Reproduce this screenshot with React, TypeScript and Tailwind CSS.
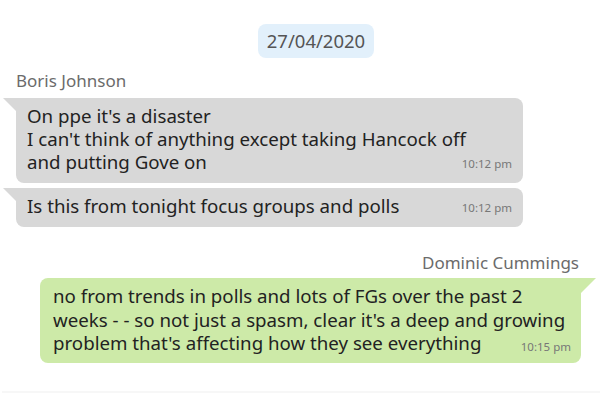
function GrayTail() {
    return <div className="h-[13px] w-[13px] shrink-0 bg-[#d8d8d8] [clip-path:polygon(0_0,100%_0,100%_100%)]"></div>;
}

function Time({ children, className = 'mt-[7px]' }: { children: string; className?: string }) {
    return (
        <span className={`float-right ml-[12px] text-[11.5px] leading-[14px] text-[#777] ${className}`}>{children}</span>
    );
}

export default function App() {
    return (
        <div className="w-[600px] h-[402px] bg-white overflow-hidden font-['Noto_Sans',sans-serif] text-[#222] flex flex-col">
            <div className="flex justify-center pl-[32px] pt-[24px]">
                <div className="rounded-[8px] bg-[#e2f0fb] px-[9px] h-[34px] flex items-center text-[18.5px] text-[#555]">
                    27/04/2020
                </div>
            </div>

            {/* Boris */}
            <div className="mt-[13px] pl-[16px] text-[17px] leading-[20px] text-[#6b6b6b]">Boris Johnson</div>
            <div className="mt-[7px] flex flex-col gap-[5px] pl-[3px]">
                <div className="flex">
                    <GrayTail />
                    <div className="w-[507px] whitespace-nowrap rounded-[8px] rounded-tl-none bg-[#d8d8d8] px-[11px] pt-[6px] pb-[10px] text-[18.7px] leading-[23px]">
                        On ppe it's a disaster
                        <br />
                        I can't think of anything except taking Hancock off
                        <br />
                        <Time>10:12 pm</Time>
                        and putting Gove on
                    </div>
                </div>
                <div className="flex">
                    <GrayTail />
                    <div className="w-[507px] whitespace-nowrap rounded-[8px] rounded-tl-none bg-[#d8d8d8] px-[11px] pt-[6px] pb-[10px] text-[18.7px] leading-[23px]">
                        <Time>10:12 pm</Time>
                        Is this from tonight focus groups and polls
                    </div>
                </div>
            </div>

            {/* Dominic */}
            <div className="mt-[26px] pr-[21px] text-right text-[17px] leading-[20px] text-[#6b6b6b]">Dominic Cummings</div>
            <div className="mt-[5px] flex justify-end pr-[4px]">
                <div className="w-[541px] whitespace-nowrap rounded-[8px] rounded-tr-none bg-[#cdeaa8] pl-[13px] pr-[10px] pt-[6px] pb-[8px] text-[18.7px] leading-[23.5px]">
                    no from trends in polls and lots of FGs over the past 2
                    <br />
                    weeks - - so not just a spasm, clear it's a deep and growing
                    <br />
                    <Time className="mt-[9px]">10:15 pm</Time>
                    problem that's affecting how they see everything
                </div>
                <div className="h-[15px] w-[15px] shrink-0 bg-[#cdeaa8] [clip-path:polygon(0_0,100%_0,0_100%)]"></div>
            </div>

            <div className="mt-[28px] ml-[2px] h-[2px] bg-[#f7f7f7]"></div>
        </div>
    );
}
